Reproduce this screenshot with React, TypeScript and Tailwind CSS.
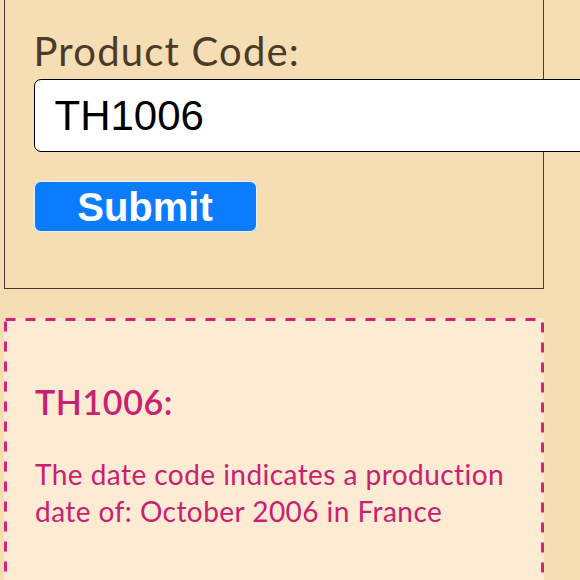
export default function App() {
  return (
    <div className="w-[580px] h-[580px] overflow-hidden bg-[#f5deb3]">
      <div className="pl-[4px] pr-[36px] -mt-[12px]">
        <div className="border-[1.5px] border-[#4a3a2a] pt-[38px] pl-[28.5px] pb-[56px]">
          <label
            className="block text-[40px] leading-[48px] tracking-[1.2px] text-[#4b3a28]"
            style={{ fontFamily: "Lato, 'Noto Sans', sans-serif" }}
          >
            Product Code:
          </label>
          <input
            readOnly
            value="TH1006"
            className="block mt-[4px] w-[600px] h-[73px] bg-white border-[1.5px] border-black rounded-[7px] pl-[20px] text-[42px] text-black outline-none"
            style={{ fontFamily: "'Liberation Sans', Arial, sans-serif" }}
          />
          <button
            className="block mt-[29px] w-[223px] h-[51px] bg-[#0a7cfd] border border-[#e6f0ff] rounded-[7px] text-white font-bold text-[40px] leading-none"
            style={{ fontFamily: "'Liberation Sans', Arial, sans-serif" }}
          >
            Submit
          </button>
        </div>
        <div
          className="relative mt-[29px] bg-[#feebd3] pt-[64px] pl-[31px] pb-[80px] text-[#c92171]"
          style={{ fontFamily: "Lato, 'Noto Sans', sans-serif" }}
        >
          <svg className="absolute inset-0 w-full h-full pointer-events-none" preserveAspectRatio="none">
            <rect
              x="1.5"
              y="1.5"
              width="calc(100% - 3px)"
              height="calc(100% - 3px)"
              fill="none"
              stroke="#d2257a"
              strokeWidth="3"
              strokeDasharray="10 10"
            />
          </svg>
          <h2 className="text-[34px] leading-[40px] font-semibold tracking-[0.6px]">TH1006:</h2>
          <p className="mt-[34px] text-[28px] leading-[37px] tracking-[0.45px]">
            The date code indicates a production
            <br />
            date of: October 2006 in France
          </p>
        </div>
      </div>
    </div>
  );
}
